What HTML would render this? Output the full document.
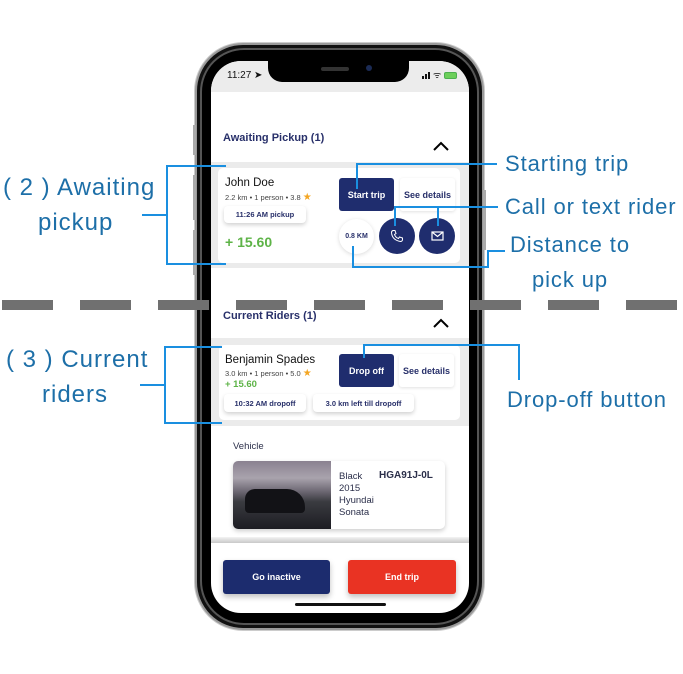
<!DOCTYPE html>
<html><head><meta charset="utf-8"><style>
*{margin:0;padding:0;box-sizing:border-box}
body{width:683px;height:674px;background:#fff;position:relative;overflow:hidden;font-family:"Liberation Sans",sans-serif}
.a{position:absolute}
.t{position:absolute;white-space:nowrap}
.nav{color:#28306a;font-weight:bold}
.btn{position:absolute;border-radius:3px;display:flex;align-items:center;justify-content:center;font-size:9px;font-weight:bold;white-space:nowrap}
.pill{position:absolute;background:#fff;border-radius:4px;box-shadow:0 2px 4px rgba(0,0,0,.18);display:flex;align-items:center;justify-content:center;font-size:7.5px;font-weight:bold;color:#28306a;white-space:nowrap}
.ln{position:absolute;background:#1a8fe0}
.lab{position:absolute;color:#1d6fa8;font-size:24px;letter-spacing:1px;white-space:nowrap}
.rl{position:absolute;color:#1d6fa8;font-size:22px;letter-spacing:0.9px;white-space:nowrap}
.circ{position:absolute;border-radius:50%;display:flex;align-items:center;justify-content:center}
.dash{position:absolute;top:300px;height:10px;width:51px;background:#707070}
</style></head><body>
<!-- phone -->
<div class="a" style="left:195px;top:43px;width:289px;height:587px;border-radius:48px;background:#111;border:2px solid #9a9a9a;box-shadow:0 0 0 1px #ccc"></div>
<div class="a" style="left:200px;top:48px;width:279px;height:577px;border-radius:44px;background:#000;border:2px solid #555"></div>
<div class="a" style="left:193px;top:125px;width:3px;height:30px;background:#aaa"></div>
<div class="a" style="left:193px;top:175px;width:3px;height:45px;background:#aaa"></div>
<div class="a" style="left:193px;top:230px;width:3px;height:45px;background:#aaa"></div>
<div class="a" style="left:483px;top:190px;width:3px;height:60px;background:#aaa"></div>
<!-- screen -->
<div class="a" style="left:211px;top:61px;width:258px;height:552px;border-radius:30px;background:#fff;overflow:hidden">
  <div class="a" style="left:0;top:0;width:258px;height:31px;background:#ececec"></div>
  <div class="a" style="left:57px;top:-2px;width:141px;height:23px;background:#000;border-radius:0 0 14px 14px"></div>
  <div class="a" style="left:110px;top:6px;width:28px;height:4px;background:#333;border-radius:2px"></div>
  <div class="a" style="left:155px;top:4px;width:6px;height:6px;background:#1b2b55;border-radius:50%"></div>
  <div class="t" style="left:16px;top:9px;font-size:10px;color:#111">11:27 ➤</div>
  <div class="a" style="left:211px;top:15px;width:2px;height:3px;background:#111"></div>
  <div class="a" style="left:214px;top:13px;width:2px;height:5px;background:#111"></div>
  <div class="a" style="left:217px;top:11px;width:2px;height:7px;background:#111"></div>
  <div class="t" style="left:222px;top:7px;font-size:9px;color:#111">ᯤ</div>
  <div class="a" style="left:233px;top:11px;width:13px;height:7px;border:1px solid #4caf50;border-radius:2px;background:#6ccf5a"></div>

  <div class="t nav" style="left:12px;top:71px;font-size:11px">Awaiting Pickup (1)</div>
  <svg class="a" style="left:221px;top:80px" width="18" height="11"><path d="M2 9 L9 2 L16 9" stroke="#000" stroke-width="2" fill="none"/></svg>
  <div class="a" style="left:0;top:101px;width:258px;height:106px;background:#ebebeb"></div>
  <div class="a" style="left:7px;top:107px;width:242px;height:95px;background:#fff;border-radius:5px"></div>
  <div class="t" style="left:14px;top:116px;font-size:11.5px;color:#111">John Doe</div>
  <div class="t" style="left:14px;top:131px;font-size:7.5px;color:#444">2.2 km • 1 person • 3.8 <span style="color:#f4a623;font-size:10px">★</span></div>
  <div class="pill" style="left:13px;top:145px;width:82px;height:17px">11:26 AM pickup</div>
  <div class="t" style="left:14px;top:173px;font-size:14px;font-weight:bold;color:#5db347">+ 15.60</div>
  <div class="btn" style="left:128px;top:117px;width:55px;height:33px;background:#1f2d6e;color:#fff">Start trip</div>
  <div class="btn" style="left:189px;top:117px;width:55px;height:33px;background:#fff;color:#28306a;box-shadow:0 1px 3px rgba(0,0,0,.12)">See details</div>
  <div class="circ" style="left:128px;top:158px;width:35px;height:35px;background:#fff;box-shadow:0 1px 4px rgba(0,0,0,.15);font-size:7px;font-weight:bold;color:#28306a">0.8 KM</div>
  <div class="circ" style="left:168px;top:157px;width:36px;height:36px;background:#1f2d6e"><svg width="14" height="14" viewBox="0 0 14 14"><path d="M3 1.5 L5 1.5 L6 4.5 L4.5 5.5 Q5.5 8.5 8.5 9.5 L9.5 8 L12.5 9 L12.5 11 Q12 12.5 10.5 12.5 Q2 11 1.5 3.5 Q1.5 2 3 1.5Z" stroke="#fff" stroke-width="1" fill="none"/></svg></div>
  <div class="circ" style="left:208px;top:157px;width:36px;height:36px;background:#1f2d6e"><svg width="13" height="10" viewBox="0 0 13 10"><rect x="1" y="1" width="11" height="8" stroke="#fff" stroke-width="1.2" fill="none"/><path d="M1 1 L6.5 5.5 L12 1" stroke="#fff" stroke-width="1.2" fill="none"/></svg></div>

  <div class="t nav" style="left:12px;top:249px;font-size:11px">Current Riders (1)</div>
  <svg class="a" style="left:221px;top:257px" width="18" height="11"><path d="M2 9 L9 2 L16 9" stroke="#000" stroke-width="2" fill="none"/></svg>
  <div class="a" style="left:0;top:277px;width:258px;height:88px;background:#ebebeb"></div>
  <div class="a" style="left:8px;top:284px;width:241px;height:75px;background:#fff;border-radius:5px"></div>
  <div class="t" style="left:14px;top:293px;font-size:11.5px;color:#111">Benjamin Spades</div>
  <div class="t" style="left:14px;top:307px;font-size:7.5px;color:#444">3.0 km • 1 person • 5.0 <span style="color:#f4a623;font-size:10px">★</span></div>
  <div class="t" style="left:14px;top:318px;font-size:9.5px;font-weight:bold;color:#5db347">+ 15.60</div>
  <div class="pill" style="left:13px;top:333px;width:82px;height:18px">10:32 AM dropoff</div>
  <div class="pill" style="left:102px;top:333px;width:101px;height:18px">3.0 km left till dropoff</div>
  <div class="btn" style="left:128px;top:293px;width:55px;height:33px;background:#1f2d6e;color:#fff">Drop off</div>
  <div class="btn" style="left:188px;top:293px;width:55px;height:33px;background:#fff;color:#28306a;box-shadow:0 1px 3px rgba(0,0,0,.12)">See details</div>

  <div class="t" style="left:22px;top:380px;font-size:9.5px;color:#2b2f4a">Vehicle</div>
  <div class="a" style="left:22px;top:400px;width:212px;height:68px;background:#fff;border-radius:5px;box-shadow:0 2px 5px rgba(0,0,0,.2);overflow:hidden">
    <div class="a" style="left:0;top:0;width:98px;height:68px;background:linear-gradient(180deg,#8a8190 0%,#a9a3ad 25%,#6c6772 45%,#3a3b40 60%,#1c1c22 100%)"></div>
    <div class="a" style="left:12px;top:28px;width:60px;height:24px;background:#121216;border-radius:10px 18px 4px 4px"></div>
    <div class="t" style="left:106px;top:10px;font-size:9.5px;line-height:12px;color:#2b2f4a">Black<br>2015<br>Hyundai<br>Sonata</div>
    <div class="t" style="left:146px;top:9px;font-size:10px;font-weight:bold;color:#2b2f4a">HGA91J-0L</div>
  </div>
  <div class="a" style="left:0;top:476px;width:258px;height:6px;background:linear-gradient(#f3f3f3,#c8c8c8)"></div>
  <div class="btn" style="left:12px;top:499px;width:107px;height:34px;background:#1c2c6e;color:#fff;box-shadow:0 3px 6px rgba(0,0,0,.25)">Go inactive</div>
  <div class="btn" style="left:137px;top:499px;width:108px;height:34px;background:#e93323;color:#fff;box-shadow:0 3px 6px rgba(0,0,0,.25)">End trip</div>
  <div class="a" style="left:84px;top:542px;width:91px;height:3px;background:#111;border-radius:2px"></div>
</div>

<!-- dashes -->
<div class="dash" style="left:2px"></div><div class="dash" style="left:80px"></div><div class="dash" style="left:158px"></div><div class="dash" style="left:236px"></div><div class="dash" style="left:314px"></div><div class="dash" style="left:392px"></div><div class="dash" style="left:470px"></div><div class="dash" style="left:548px"></div><div class="dash" style="left:626px"></div>

<!-- left annotations -->
<div class="lab" style="left:3px;top:174px">( 2 ) Awaiting</div>
<div class="lab" style="left:38px;top:209px">pickup</div>
<div class="ln" style="left:142px;top:214px;width:25px;height:2px"></div>
<div class="ln" style="left:166px;top:165px;width:2px;height:100px"></div>
<div class="ln" style="left:166px;top:165px;width:60px;height:2px"></div>
<div class="ln" style="left:166px;top:263px;width:60px;height:2px"></div>
<div class="lab" style="left:6px;top:346px">( 3 ) Current</div>
<div class="lab" style="left:42px;top:381px">riders</div>
<div class="ln" style="left:140px;top:384px;width:25px;height:2px"></div>
<div class="ln" style="left:164px;top:346px;width:2px;height:78px"></div>
<div class="ln" style="left:164px;top:346px;width:58px;height:2px"></div>
<div class="ln" style="left:164px;top:422px;width:58px;height:2px"></div>

<!-- right annotations -->
<div class="ln" style="left:356px;top:163px;width:2px;height:26px"></div>
<div class="ln" style="left:356px;top:163px;width:141px;height:2px"></div>
<div class="rl" style="left:505px;top:151px">Starting trip</div>
<div class="ln" style="left:394px;top:206px;width:104px;height:2px"></div>
<div class="ln" style="left:394px;top:206px;width:2px;height:20px"></div>
<div class="ln" style="left:437px;top:206px;width:2px;height:20px"></div>
<div class="rl" style="left:505px;top:194px">Call or text rider</div>
<div class="ln" style="left:352px;top:246px;width:2px;height:22px"></div>
<div class="ln" style="left:352px;top:266px;width:137px;height:2px"></div>
<div class="ln" style="left:487px;top:250px;width:2px;height:18px"></div>
<div class="ln" style="left:487px;top:250px;width:18px;height:2px"></div>
<div class="rl" style="left:510px;top:232px">Distance to</div>
<div class="rl" style="left:532px;top:267px">pick up</div>
<div class="ln" style="left:363px;top:344px;width:2px;height:14px"></div>
<div class="ln" style="left:363px;top:344px;width:157px;height:2px"></div>
<div class="ln" style="left:518px;top:344px;width:2px;height:36px"></div>
<div class="rl" style="left:507px;top:387px">Drop-off button</div>
</body></html>
